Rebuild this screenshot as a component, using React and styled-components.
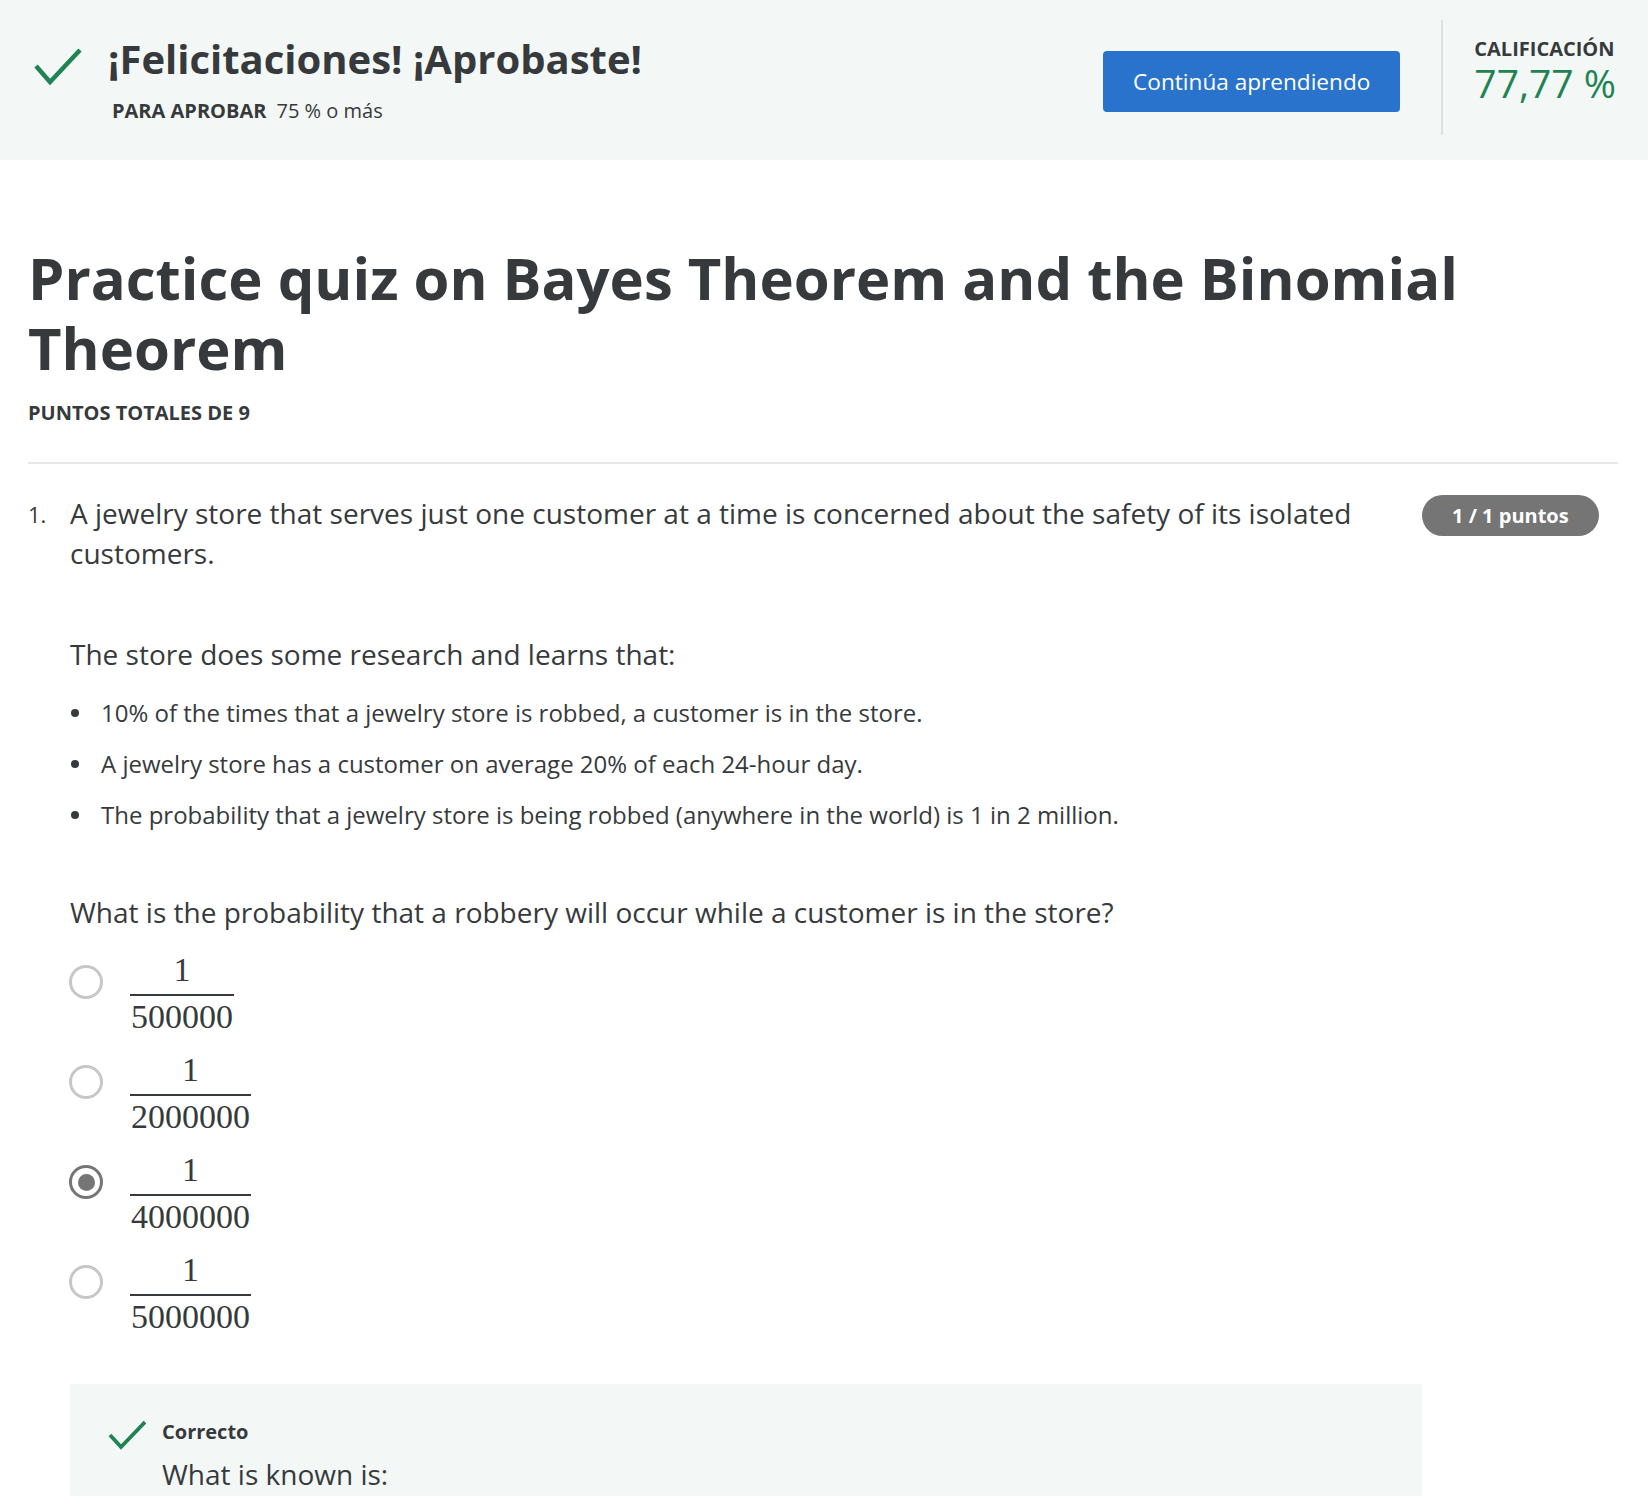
import React from "react";
import styled, { createGlobalStyle } from "styled-components";

const Global = createGlobalStyle`
  html, body { margin: 0; padding: 0; background: #ffffff; }
  body { font-family: "Open Sans", "Noto Sans", sans-serif; color: #373a3c; }
  * { box-sizing: border-box; }
`;

const Page = styled.div`
  width: 1648px;
  min-height: 1496px;
  overflow: hidden;
`;

const Header = styled.header`
  height: 160px;
  background: #f3f8f6;
  display: flex;
  align-items: flex-start;
  padding: 0 32px 0 34px;
`;

const HeaderLeft = styled.div`
  display: flex;
  align-items: flex-start;
  gap: 26px;
`;

const CheckSvg = styled.svg`
  flex: none;
  margin-top: ${(p) => p.$top || 0}px;
`;

const TitleBlock = styled.div`
  display: flex;
  flex-direction: column;
  margin-top: 34px;
`;

const PassTitle = styled.h2`
  margin: 0;
  font-size: 40px;
  line-height: 50px;
  font-weight: 700;
  color: #373a3c;
`;

const PassSub = styled.div`
  margin: 13px 0 0 4px;
  font-size: 20px;
  line-height: 27px;
  color: #373a3c;
  display: flex;
  gap: 10px;
`;

const SubLabel = styled.span`
  font-weight: 700;
`;

const PrimaryButton = styled.button`
  margin-left: auto;
  margin-top: 51px;
  height: 61px;
  padding: 0 30px;
  border: none;
  border-radius: 4px;
  background: #2a73cc;
  color: #ffffff;
  font-family: "Open Sans", sans-serif;
  font-size: 22.6px;
  font-weight: 400;
  cursor: pointer;
`;

const VDivider = styled.div`
  flex: none;
  width: 2px;
  height: 115px;
  margin: 20px 31px 0 41px;
  background: #dfe1e1;
`;

const Grade = styled.div`
  display: flex;
  flex-direction: column;
  margin-top: 36px;
`;

const GradeLabel = styled.div`
  font-size: 20px;
  line-height: 26px;
  font-weight: 700;
  color: #373a3c;
`;

const GradeValue = styled.div`
  font-size: 39px;
  line-height: 44px;
  margin-top: -1px;
  color: #1f8354;
`;

const Main = styled.main`
  padding: 0 30px 0 28px;
`;

const QuizTitle = styled.h1`
  margin: 83px 0 0;
  font-size: 58px;
  line-height: 70px;
  font-weight: 700;
  color: #373a3c;
`;

const TotalPoints = styled.div`
  margin-top: 18px;
  font-size: 20px;
  line-height: 24px;
  font-weight: 700;
  color: #373a3c;
`;

const Rule = styled.hr`
  margin: 37px 0 0;
  border: none;
  height: 2px;
  background: #e5e7e8;
`;

const Question = styled.section`
  display: grid;
  grid-template-columns: 42px 1fr 196px;
  margin-top: 29px;
`;

const QNumber = styled.div`
  font-size: 22px;
  line-height: 22px;
  margin-top: 10px;
`;

const QBody = styled.div`
  display: flex;
  flex-direction: column;
  min-width: 0;
`;

const Para = styled.p`
  margin: ${(p) => p.$mt || 0}px 0 0;
  font-size: 28px;
  line-height: 40px;
  color: #373a3c;
`;

const Bullets = styled.ul`
  list-style: none;
  margin: 22px 0 0;
  padding: 0;
`;

const Bullet = styled.li`
  display: flex;
  align-items: center;
  font-size: 24px;
  line-height: 34px;
  margin-bottom: 17px;
  &:last-child { margin-bottom: 0; }
`;

const Dot = styled.span`
  flex: none;
  width: 8px;
  height: 8px;
  border-radius: 50%;
  background: #373a3c;
  margin: 0 22px 0 1px;
`;

const Options = styled.div`
  display: flex;
  flex-direction: column;
  gap: 19px;
  margin-top: 21px;
  margin-left: -1px;
`;

const Option = styled.label`
  display: flex;
  align-items: flex-start;
  gap: 27px;
`;

const Radio = styled.span`
  flex: none;
  width: 34px;
  height: 34px;
  margin-top: 12px;
  border-radius: 50%;
  border: 3px solid ${(p) => (p.$checked ? "#757575" : "#c7c7c7")};
  display: flex;
  align-items: center;
  justify-content: center;
  &::after {
    content: "";
    display: ${(p) => (p.$checked ? "block" : "none")};
    width: 17px;
    height: 17px;
    border-radius: 50%;
    background: #757575;
  }
`;

const Frac = styled.span`
  display: inline-flex;
  flex-direction: column;
  align-items: stretch;
  font-family: "Liberation Serif", "Times New Roman", serif;
  font-size: 34px;
  line-height: 34px;
  color: #373a3c;
`;

const Num = styled.span`
  text-align: center;
  padding: 0 2px 7px;
  border-bottom: 2px solid #373a3c;
`;

const Den = styled.span`
  text-align: center;
  padding: 4px 1px 0;
`;

const Pill = styled.div`
  justify-self: start;
  height: 41px;
  margin-top: 2px;
  padding: 0 30px;
  border-radius: 21px;
  background: #757575;
  color: #ffffff;
  font-size: 20px;
  font-weight: 700;
  display: flex;
  align-items: center;
`;

const Feedback = styled.div`
  margin-top: 50px;
  background: #f3f8f6;
  display: grid;
  grid-template-columns: 38px 1fr;
  column-gap: 16px;
  padding: 36px 38px 60px 38px;
`;

const FeedbackTitle = styled.div`
  font-size: 20px;
  line-height: 24px;
  font-weight: 700;
`;

const FeedbackText = styled.p`
  grid-column: 2;
  margin: 4px 0 0;
  font-size: 28px;
  line-height: 40px;
`;

const Check = ({ w, h, pts, sw, top }) => (
  <CheckSvg width={w} height={h} viewBox={`0 0 ${w} ${h}`} $top={top}>
    <polyline points={pts} fill="none" stroke="#1f8354" strokeWidth={sw} strokeLinecap="butt" strokeLinejoin="miter" />
  </CheckSvg>
);

const options = [
  { d: "500000", checked: false },
  { d: "2000000", checked: false },
  { d: "4000000", checked: true },
  { d: "5000000", checked: false },
];

export default function App() {
  return (
    <Page>
      <Global />
      <Header>
        <HeaderLeft>
          <Check w={48} h={38} pts="2,19 16,35 46,3" sw={4.5} top={47} />
          <TitleBlock>
            <PassTitle>¡Felicitaciones! ¡Aprobaste!</PassTitle>
            <PassSub>
              <SubLabel>PARA APROBAR</SubLabel>
              <span>75 % o más</span>
            </PassSub>
          </TitleBlock>
        </HeaderLeft>
        <PrimaryButton>Continúa aprendiendo</PrimaryButton>
        <VDivider />
        <Grade>
          <GradeLabel>CALIFICACIÓN</GradeLabel>
          <GradeValue>77,77 %</GradeValue>
        </Grade>
      </Header>
      <Main>
        <QuizTitle>Practice quiz on Bayes Theorem and the Binomial Theorem</QuizTitle>
        <TotalPoints>PUNTOS TOTALES DE 9</TotalPoints>
        <Rule />
        <Question>
          <QNumber>1.</QNumber>
          <QBody>
            <Para>
              A jewelry store that serves just one customer at a time is concerned about the safety of its isolated customers.
            </Para>
            <Para $mt={61}>The store does some research and learns that:</Para>
            <Bullets>
              <Bullet><Dot />10% of the times that a jewelry store is robbed, a customer is in the store.</Bullet>
              <Bullet><Dot />A jewelry store has a customer on average 20% of each 24-hour day.</Bullet>
              <Bullet><Dot />The probability that a jewelry store is being robbed (anywhere in the world) is 1 in 2 million.</Bullet>
            </Bullets>
            <Para $mt={60}>What is the probability that a robbery will occur while a customer is in the store?</Para>
            <Options>
              {options.map((o) => (
                <Option key={o.d}>
                  <Radio $checked={o.checked} />
                  <Frac>
                    <Num>1</Num>
                    <Den>{o.d}</Den>
                  </Frac>
                </Option>
              ))}
            </Options>
            <Feedback>
              <Check w={38} h={30} pts="2,15 13,27 37,2" sw={3.8} top={0} />
              <FeedbackTitle>Correcto</FeedbackTitle>
              <FeedbackText>What is known is:</FeedbackText>
            </Feedback>
          </QBody>
          <Pill>1 / 1 puntos</Pill>
        </Question>
      </Main>
    </Page>
  );
}
